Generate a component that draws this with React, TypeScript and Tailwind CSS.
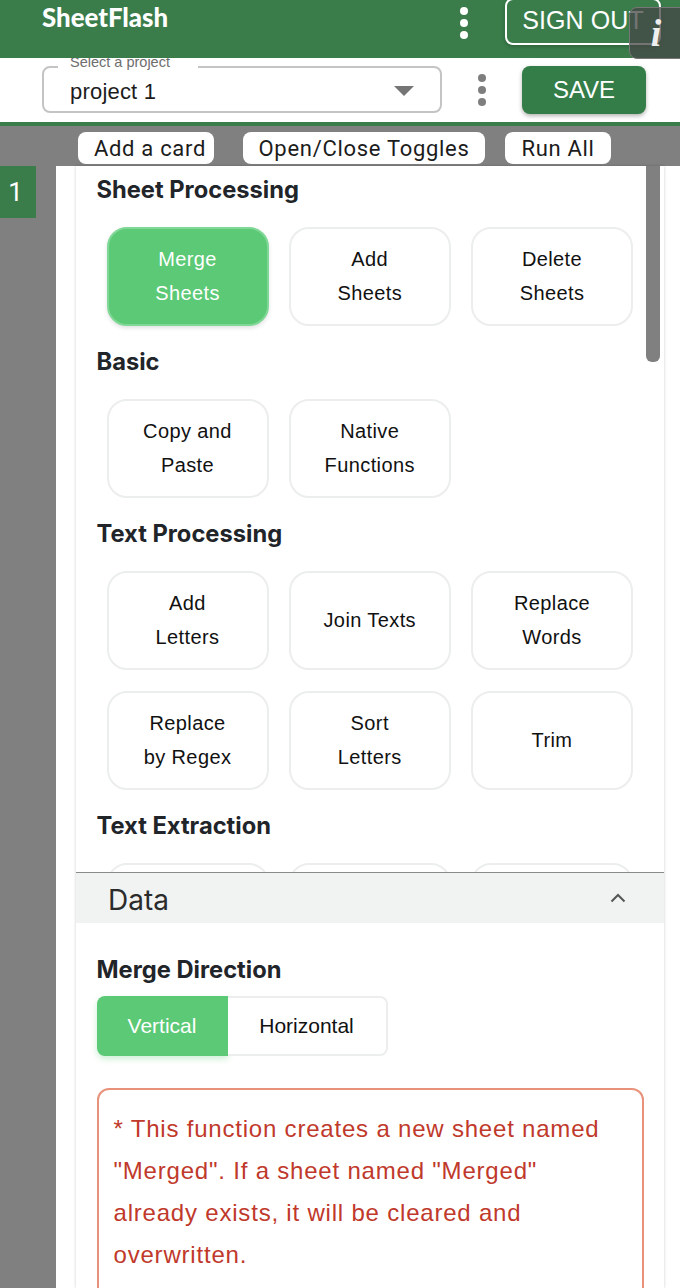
import React from "react";

const sans = "font-['Inter',sans-serif]";
const arial = "font-['Liberation_Sans',sans-serif]";

function Dots({ cls }: { cls: string }) {
  return (
    <div className="flex flex-col gap-[4px]">
      <span className={`w-[8px] h-[8px] rounded-full ${cls}`} />
      <span className={`w-[8px] h-[8px] rounded-full ${cls}`} />
      <span className={`w-[8px] h-[8px] rounded-full ${cls}`} />
    </div>
  );
}

function Tile({ a, b, active }: { a: string; b?: string; active?: boolean }) {
  return (
    <div
      className={`w-[162px] h-[99px] rounded-[20px] border-2 flex flex-col items-center justify-center pb-[2px] text-[20px] leading-[34px] tracking-[0.4px] ${arial} ${
        active
          ? "bg-[#5bc975] border-[#7fd896] text-white shadow-[0_2px_4px_rgba(0,0,0,0.12)]"
          : "bg-white border-[#eceeee] text-[#111111]"
      }`}
    >
      <span>{a}</span>
      {b && <span>{b}</span>}
    </div>
  );
}

function Heading({ children, cls }: { children: React.ReactNode; cls: string }) {
  return <div className={`${sans} font-bold text-[23.7px] leading-[28px] text-[#212529] ${cls}`}>{children}</div>;
}

function Rows({ rows }: { rows: { a: string; b?: string; active?: boolean }[][] }) {
  return (
    <div className="flex flex-col gap-[21px] pl-[30.5px]">
      {rows.map((r, i) => (
        <div key={i} className="flex gap-[20.25px]">
          {r.map((t) => (
            <Tile key={t.a + (t.b || "")} {...t} />
          ))}
        </div>
      ))}
    </div>
  );
}

function TopButton({ children, w, cls = "" }: { children: React.ReactNode; w: string; cls?: string }) {
  return (
    <div className={`${w} ${cls} h-[32px] bg-white rounded-lg flex items-center justify-center text-[22px] tracking-[0.7px] text-[#1c1c1c] font-['Roboto',sans-serif]`}>
      {children}
    </div>
  );
}

export default function App() {
  return (
    <div className="relative w-[680px] h-[1288px] overflow-hidden bg-white">
      {/* header */}
      <header className="relative z-10 h-[58px] bg-[#3a7d4b] flex items-start pl-[42px]">
        <div className="mt-[2px] w-[126px] font-['Lato',sans-serif] font-black text-[25.8px] leading-[30px] text-white whitespace-nowrap">SheetFlash</div>
        <div className="ml-[292px] mt-[7px]"><Dots cls="bg-white" /></div>
        <div className={`ml-[37px] -mt-[2px] w-[156px] h-[47px] border-2 border-white rounded-lg flex items-center justify-center pb-[2px] text-white text-[25px] tracking-[0.1px] shadow-[0_2px_4px_rgba(0,0,0,0.2)] ${arial}`}>
          SIGN OUT
        </div>
      </header>

      {/* project row */}
      <div className="h-[68px] border-b-4 border-[#3a7d4b] bg-white flex items-center pl-[42px] pb-[4px]">
        <div className="relative w-[400px] h-[47px] mt-[3px] border-2 border-[#c4c4c4] rounded-lg flex items-center pl-[26px] pr-[26px] justify-between">
          <span className={`absolute left-[14px] -top-[14px] bg-white pl-[12px] pr-[28px] text-[14.5px] leading-[16px] text-[#6e6e6e] ${arial}`}>Select a project</span>
          <span className={`mt-[3px] text-[22px] text-[#1c1c1c] tracking-[0.2px] ${arial}`}>project 1</span>
          <span className="mt-[2px] w-0 h-0 border-l-[10px] border-r-[10px] border-t-[10px] border-l-transparent border-r-transparent border-t-[#757575]" />
        </div>
        <div className="ml-[36px] mt-[3px]"><Dots cls="bg-[#7e7e7e]" /></div>
        <div className={`ml-[36px] w-[124px] h-[48px] mt-[3px] rounded-lg bg-[#347d49] text-white flex items-center justify-center text-[24px] shadow-[0_2px_4px_rgba(0,0,0,0.3)] ${arial}`}>
          SAVE
        </div>
      </div>

      {/* toolbar */}
      <div className="h-[40px] bg-[#808080] flex items-start pt-[6px] pl-[78px]">
        <TopButton w="w-[136px]" cls="pl-[8px]">Add a card</TopButton>
        <div className="w-[29px]" />
        <TopButton w="w-[242px]">Open/Close Toggles</TopButton>
        <div className="w-[20px]" />
        <TopButton w="w-[106px]">Run All</TopButton>
      </div>

      {/* body */}
      <div className="flex h-[1122px]">
        <div className="w-[56px] shrink-0 bg-[#808080]">
          <div className={`w-[36px] h-[52px] bg-[#3a7d4b] text-white text-[26px] flex items-center justify-center pr-[5px] font-['Roboto',sans-serif]`}>1</div>
        </div>
        <div className="flex-1 bg-white pl-[20px] pr-[16px]">
          <div className="relative h-full bg-white shadow-[0_0_3px_rgba(0,0,0,0.2)]">
            {/* scroll panel */}
            <div className="relative h-[706px] overflow-hidden">
              <Heading cls="mt-[10px] ml-[20.5px]">Sheet Processing</Heading>
              <div className="mt-[23px]">
                <Rows rows={[[{ a: "Merge", b: "Sheets", active: true }, { a: "Add", b: "Sheets" }, { a: "Delete", b: "Sheets" }]]} />
              </div>
              <Heading cls="mt-[22px] ml-[20.5px]">Basic</Heading>
              <div className="mt-[23px]">
                <Rows rows={[[{ a: "Copy and", b: "Paste" }, { a: "Native", b: "Functions" }]]} />
              </div>
              <Heading cls="mt-[22px] ml-[20.5px]">Text Processing</Heading>
              <div className="mt-[23px]">
                <Rows
                  rows={[
                    [{ a: "Add", b: "Letters" }, { a: "Join Texts" }, { a: "Replace", b: "Words" }],
                    [{ a: "Replace", b: "by Regex" }, { a: "Sort", b: "Letters" }, { a: "Trim" }],
                  ]}
                />
              </div>
              <Heading cls="mt-[22px] ml-[20.5px]">Text Extraction</Heading>
              <div className="mt-[23px]">
                <Rows rows={[[{ a: "Extract", b: "Letters" }, { a: "Extract", b: "Words" }, { a: "Split", b: "Text" }]]} />
              </div>
              <div className="absolute right-[4px] top-0 w-[14px] h-[196px] bg-[#808080] rounded-b-[6px]" />
            </div>

            {/* data accordion */}
            <div className="h-[51px] bg-[#f1f3f3] border-t border-[#8a8a8a] flex items-center justify-between pl-[32px] pr-[38px]">
              <span className={`mt-[3px] text-[28px] text-[#2b2b2b] ${sans}`}>Data</span>
              <svg width="16" height="10" viewBox="0 0 16 10" fill="none" stroke="#555" strokeWidth="2">
                <path d="M1.5 8.5 8 2l6.5 6.5" />
              </svg>
            </div>

            <div className="pl-[20.5px] pr-[20px]">
              <Heading cls="mt-[33px]">Merge Direction</Heading>
              <div className={`mt-[12px] flex w-[291px] h-[60px] text-[21px] ${arial}`}>
                <div className="w-[131px] bg-[#5bc975] rounded-l-lg text-white flex items-center justify-center shadow-[0_3px_6px_rgba(91,201,117,0.3)]">Vertical</div>
                <div className="flex-1 bg-white border-2 border-l-0 border-[#eceeee] rounded-r-lg text-[#111111] flex items-center justify-center">Horizontal</div>
              </div>
              <div className={`mt-[32px] h-[240px] rounded-xl border-2 border-[#e8927c] pl-[15px] pr-[32px] pt-[18px] text-[#c0392b] text-[24px] leading-[42px] tracking-[0.8px] ${arial}`}>
                * This function creates a new sheet named "Merged". If a sheet named "Merged" already exists, it will be cleared and overwritten.
              </div>
            </div>
          </div>
        </div>
      </div>

      {/* floating info button */}
      <div className="absolute z-20 left-[629px] top-[7px] w-[60px] h-[52px] rounded-lg bg-[rgba(70,70,70,0.75)] border border-[#777] flex items-center justify-center pr-[6px]">
        <span className="font-['Liberation_Serif',serif] italic font-bold text-[#eeeeee] text-[38px] leading-none">i</span>
      </div>
    </div>
  );
}
